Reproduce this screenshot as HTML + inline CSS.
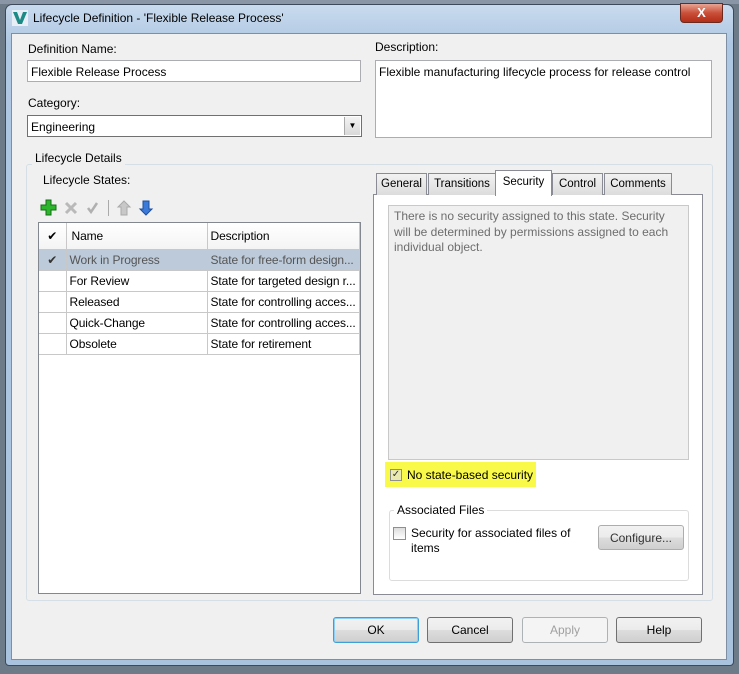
<!DOCTYPE html>
<html><head><style>
*{box-sizing:border-box}
body{margin:0;width:739px;height:674px;overflow:hidden;background:#6d7a88;font-family:"Liberation Sans",sans-serif;font-size:12px;color:#000;position:relative}
.a{position:absolute}
.frame{left:5px;top:4px;width:729px;height:662px;border-radius:7px 7px 4px 4px;background:linear-gradient(#c9dbee,#aec7e2 40px,#a9c3df);border:1px solid #3d4a5c}
.client{left:11px;top:33px;width:716px;height:627px;background:#f0f0f0;border:1px solid #7e8fa3}
.inp{background:#fff;border:1px solid #abadb3}
.lbl{white-space:nowrap}
.btn{border:1px solid #707070;border-radius:3px;background:linear-gradient(#f2f2f2,#ebebeb 50%,#dddddd 51%,#cfcfcf);text-align:center;line-height:24px;font-size:12px}
.grp{border:1px solid #d5dfe5;border-radius:3px}
.tab{top:173px;height:22px;border:1px solid #898c95;border-bottom:none;background:linear-gradient(#f2f2f2,#dcdcdc);text-align:center;line-height:20px;font-size:11.5px;white-space:nowrap}
td{height:21px;border-right:1px solid #c8c8c8;border-bottom:1px solid #c8c8c8;padding:0 3px;white-space:nowrap;overflow:hidden;letter-spacing:-0.1px}
table{border-collapse:collapse;font-size:12px;table-layout:fixed}
</style></head><body>
<div class="a frame"></div>
<div class="a" style="left:0;top:0;width:739px;height:4px;background:#8a96a6"></div>
<svg class="a" style="left:12px;top:10px" width="16" height="16"><rect width="16" height="16" fill="#e8eef5"/><path d="M1 2 L6 14 L10 14 L15 2 L11 2 L8 10 L5 2Z" fill="#1d8a86"/></svg>
<div class="a lbl" style="left:33px;top:11px;font-size:12px">Lifecycle Definition - 'Flexible Release Process'</div>
<div class="a" style="left:680px;top:3px;width:43px;height:20px;border-radius:0 0 4px 4px;background:linear-gradient(#e8a493,#c9503a 50%,#b42d17);border:1px solid #6b2a1f;color:#fff;text-align:center;font-weight:bold;line-height:18px;font-size:13px">X</div>
<div class="a client"></div>

<div class="a lbl" style="left:28px;top:42px">Definition Name:</div>
<div class="a inp" style="left:27px;top:60px;width:334px;height:22px;padding:4px 3px">Flexible Release Process</div>
<div class="a lbl" style="left:375px;top:40px">Description:</div>
<div class="a inp" style="left:375px;top:60px;width:337px;height:78px;padding:4px 3px">Flexible manufacturing lifecycle process for release control</div>
<div class="a lbl" style="left:28px;top:96px">Category:</div>
<div class="a inp" style="left:27px;top:115px;width:335px;height:22px;padding:4px 3px;border-color:#707070">Engineering</div>
<div class="a" style="left:344px;top:117px;width:16px;height:18px;background:linear-gradient(#f3f3f3,#d9d9d9);border-left:1px solid #aaa;font-size:8px;text-align:center;line-height:18px">▼</div>

<div class="a grp" style="left:26px;top:164px;width:687px;height:437px"></div>
<div class="a lbl" style="left:32px;top:151px;background:#f0f0f0;padding:0 3px">Lifecycle Details</div>
<div class="a lbl" style="left:43px;top:173px">Lifecycle States:</div>
<svg class="a" style="left:40px;top:199px" width="120" height="18">
<path d="M6 1h5v5h5v5h-5v5h-5v-5h-5v-5h5z" fill="#2db52d" stroke="#137013"/>
<path d="M26 4l10 10M36 4l-10 10" stroke="#b9b9b9" stroke-width="3"/>
<path d="M48 9l3 4l6-9" stroke="#b0b0b0" stroke-width="2.5" fill="none"/>
<rect x="68" y="1" width="1" height="16" fill="#aaa"/>
<path d="M84 2l6 6h-3v8h-6v-8h-3z" fill="#c8c8c8" stroke="#aaa"/>
<path d="M106 16l6-6h-3v-8h-6v8h-3z" fill="#3b7ad8" stroke="#1d4f9e"/>
</svg>
<div class="a" style="left:38px;top:222px;width:323px;height:372px;background:#fff;border:1px solid #828790"></div>
<table class="a" style="left:39px;top:223px;width:321px">
<colgroup><col style="width:27px"><col style="width:141px"><col></colgroup>
<tr style="background:linear-gradient(#fff,#f4f4f4)"><td style="height:26px;text-align:center">✔</td><td style="padding-left:5px">Name</td><td>Description</td></tr>
<tr style="background:#bccad9;color:#555"><td style="text-align:center;color:#333">✔</td><td>Work in Progress</td><td>State for free-form design...</td></tr>
<tr><td></td><td>For Review</td><td>State for targeted design r...</td></tr>
<tr><td></td><td>Released</td><td>State for controlling acces...</td></tr>
<tr><td></td><td>Quick-Change</td><td>State for controlling acces...</td></tr>
<tr><td></td><td>Obsolete</td><td>State for retirement</td></tr>
</table>

<div class="a" style="left:373px;top:194px;width:330px;height:401px;background:#fff;border:1px solid #898c95"></div>
<div class="a tab" style="left:376px;width:51px">General</div>
<div class="a tab" style="left:428px;width:68px">Transitions</div>
<div class="a tab" style="left:495px;top:170px;width:57px;height:26px;background:#fff;line-height:22px">Security</div>
<div class="a tab" style="left:552px;width:51px">Control</div>
<div class="a tab" style="left:604px;width:68px">Comments</div>
<div class="a" style="left:388px;top:205px;width:301px;height:255px;background:#f0f0f0;border:1px solid #c9c9c9;color:#6d6d6d;padding:3px 5px;line-height:15.5px">There is no security assigned to this state. Security will be determined by permissions assigned to each individual object.</div>
<div class="a" style="left:385px;top:462px;width:151px;height:25px;background:#f9f94a"></div>
<div class="a" style="left:390px;top:469px;width:12px;height:12px;border:1px solid #8f8f8f;background:#e9e9b0;font-size:10px;line-height:10px;text-align:center;color:#333">✓</div>
<div class="a lbl" style="left:407px;top:468px">No state-based security</div>
<div class="a grp" style="left:389px;top:510px;width:300px;height:71px;border-color:#dcdcdc"></div>
<div class="a lbl" style="left:394px;top:503px;background:#fff;padding:0 3px">Associated Files</div>
<div class="a" style="left:393px;top:527px;width:13px;height:13px;border:1px solid #8f8f8f;background:linear-gradient(#ddd,#fff)"></div>
<div class="a" style="left:411px;top:526px;line-height:15px">Security for associated files of<br>items</div>
<div class="a btn" style="left:598px;top:525px;width:86px;height:25px;border-color:#adadad;color:#333">Configure...</div>

<div class="a btn" style="left:333px;top:617px;width:86px;height:26px;border-color:#3c9fd8;box-shadow:inset 0 0 0 1px #8ed0f5">OK</div>
<div class="a btn" style="left:427px;top:617px;width:86px;height:26px">Cancel</div>
<div class="a btn" style="left:522px;top:617px;width:86px;height:26px;background:#f4f4f4;border-color:#adb2b5;color:#a0a0a0">Apply</div>
<div class="a btn" style="left:616px;top:617px;width:86px;height:26px">Help</div>
</body></html>
